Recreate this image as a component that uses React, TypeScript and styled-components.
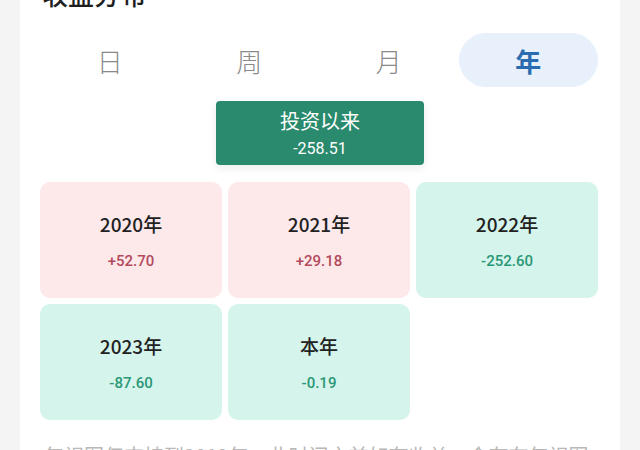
import React from 'react';
import styled, { createGlobalStyle } from 'styled-components';

const GlobalStyle = createGlobalStyle`
    html, body {
        margin: 0;
        padding: 0;
        background: #f4f4f5;
        font-family: "Noto Sans CJK SC", "Noto Sans", sans-serif;
    }
`;

interface YearItem {
    label: string;
    value: string;
}

const tabs = ['日', '周', '月', '年'];

const years: YearItem[] = [
    { label: '2020年', value: '+52.70' },
    { label: '2021年', value: '+29.18' },
    { label: '2022年', value: '-252.60' },
    { label: '2023年', value: '-87.60' },
    { label: '本年', value: '-0.19' },
];

function App() {
    const activeTab = '年';

    return (
        <>
            <GlobalStyle />
            <Page>
                <Card>
                    <Title>收益分布</Title>
                    <TabRow>
                        {tabs.map((t) => (
                            <Tab key={t} $active={t === activeTab}>{t}</Tab>
                        ))}
                    </TabRow>
                    <TipRow>
                        <Tip>
                            <TipTitle>投资以来</TipTitle>
                            <TipValue>-258.51</TipValue>
                        </Tip>
                    </TipRow>
                    <YearGrid>
                        {years.map((y) => {
                            const up = y.value.startsWith('+');
                            return (
                                <YearCell key={y.label} $up={up}>
                                    <YearLabel>{y.label}</YearLabel>
                                    <YearValue $up={up}>{y.value}</YearValue>
                                </YearCell>
                            );
                        })}
                    </YearGrid>
                    <Note>年视图仅支持到2019年，此时间之前如有收益，会存在年视图</Note>
                </Card>
            </Page>
        </>
    );
}

const Page = styled.div`
    width: 640px;
    height: 450px;
    overflow: hidden;
    padding: 0 20px;
    box-sizing: border-box;
`;

const Card = styled.div`
    width: 600px;
    margin-top: -19px;
    background: #ffffff;
    padding: 0 22px 20px 20px;
    box-sizing: border-box;
`;

const Title = styled.div`
    padding-left: 2px;
    font-size: 26px;
    line-height: 26px;
    font-weight: 500;
    color: #1f1f1f;
`;

const TabRow = styled.div`
    display: grid;
    grid-template-columns: repeat(4, 1fr);
    margin-top: 26px;
    height: 54px;
`;

const Tab = styled.div<{ $active?: boolean }>`
    display: flex;
    align-items: center;
    justify-content: center;
    border-radius: 27px;
    font-size: 26px;
    font-weight: ${(p) => (p.$active ? 700 : 300)};
    color: ${(p) => (p.$active ? '#2b6cb0' : '#8a8a8a')};
    background: ${(p) => (p.$active ? '#e7f0fb' : 'transparent')};
`;

const TipRow = styled.div`
    display: flex;
    justify-content: center;
    margin-top: 14px;
    padding-left: 2px;
`;

const Tip = styled.div`
    width: 208px;
    height: 64px;
    border-radius: 4px;
    background: #2a8a6d;
    color: #ffffff;
    display: flex;
    flex-direction: column;
    align-items: center;
    justify-content: center;
    gap: 8px;
    padding-top: 2px;
    box-sizing: border-box;
    box-shadow: 0 3px 8px rgba(0, 0, 0, 0.08);
`;

const TipTitle = styled.div`
    font-size: 20px;
    line-height: 22px;
    font-weight: 400;
`;

const TipValue = styled.div`
    font-size: 16px;
    line-height: 18px;
    font-family: "Roboto", "Noto Sans", sans-serif;
`;

const YearGrid = styled.div`
    display: grid;
    grid-template-columns: repeat(3, 182px);
    grid-auto-rows: 116px;
    gap: 6px;
    margin-top: 17px;
`;

const YearCell = styled.div<{ $up: boolean }>`
    border-radius: 10px;
    background: ${(p) => (p.$up ? '#fde8ea' : '#d5f4eb')};
    display: flex;
    flex-direction: column;
    align-items: center;
    justify-content: center;
    gap: 16px;
    padding-top: 2px;
    box-sizing: border-box;
`;

const YearLabel = styled.div`
    font-size: 19px;
    line-height: 24px;
    font-weight: 500;
    color: #222222;
`;

const YearValue = styled.div<{ $up: boolean }>`
    font-size: 15px;
    line-height: 18px;
    font-weight: 500;
    font-family: "Roboto", "Noto Sans", sans-serif;
    color: ${(p) => (p.$up ? '#b34a5c' : '#2a9777')};
`;

const Note = styled.div`
    margin-top: 22px;
    padding-left: 4px;
    font-size: 20px;
    line-height: 28px;
    color: #b8b8b8;
    white-space: nowrap;
`;

export default App;
